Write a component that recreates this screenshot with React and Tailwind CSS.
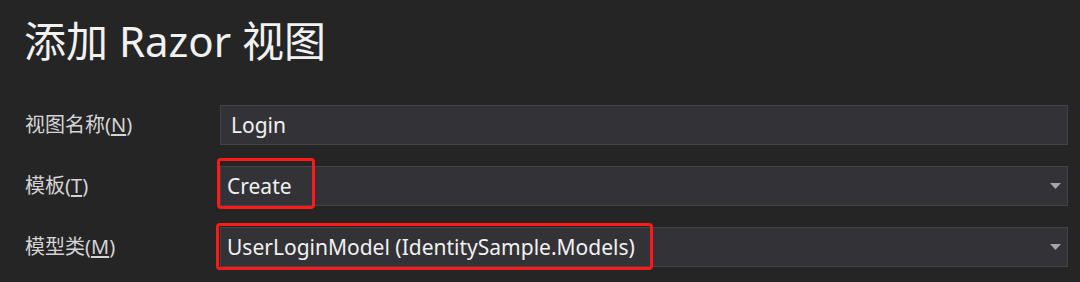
import React from 'react'

const font = { fontFamily: '"Noto Sans", "Noto Sans CJK SC", sans-serif' }

const Arrow = () => (
  <svg width="11" height="6" viewBox="0 0 11 6" className="shrink-0">
    <path d="M0 0 H11 L5.5 6 Z" fill="#a6a6a6" />
  </svg>
)

const Field = ({ value, dropdown, highlight }) => (
  <div className="relative h-10 w-[848px]">
    <div className="flex h-full items-center justify-between border border-[#434346] bg-[#333337] pr-[6px]">
      <span className={`${dropdown ? 'pl-[6px]' : 'pl-[10px]'} text-[21px] leading-none text-[#f1f1f1]`}>{value}</span>
      {dropdown && <Arrow />}
    </div>
    {highlight}
  </div>
)

const Label = ({ text, mnemonic }) => (
  <div className="text-[20px] leading-none text-[#d4d4d4]">
    {text}(<span className="underline underline-offset-2">{mnemonic}</span>)
  </div>
)

export default function App() {
  return (
    <div className="h-[282px] w-[1080px] overflow-hidden bg-[#252526]" style={font}>
      <h1 className="pl-[24px] pt-[13px] text-[42px] font-normal leading-[56px] text-[#f1f1f1]">添加 Razor 视图</h1>
      <div className="mt-[36px] grid grid-cols-[195px_848px] items-center gap-y-[21px] pl-[25px]">
        <Label text="视图名称" mnemonic="N" />
        <Field value="Login" />
        <Label text="模板" mnemonic="T" />
        <Field
          value="Create"
          dropdown
          highlight={<div className="pointer-events-none absolute -left-[3px] -top-[8px] h-[51px] w-[98px] rounded-[4px] border-[3px] border-[#ff1a1a]" />}
        />
        <Label text="模型类" mnemonic="M" />
        <Field
          value="UserLoginModel (IdentitySample.Models)"
          dropdown
          highlight={<div className="pointer-events-none absolute -left-[4px] -top-[4px] h-[47px] w-[437px] rounded-[4px] border-[3px] border-[#ff1a1a]" />}
        />
      </div>
    </div>
  )
}
